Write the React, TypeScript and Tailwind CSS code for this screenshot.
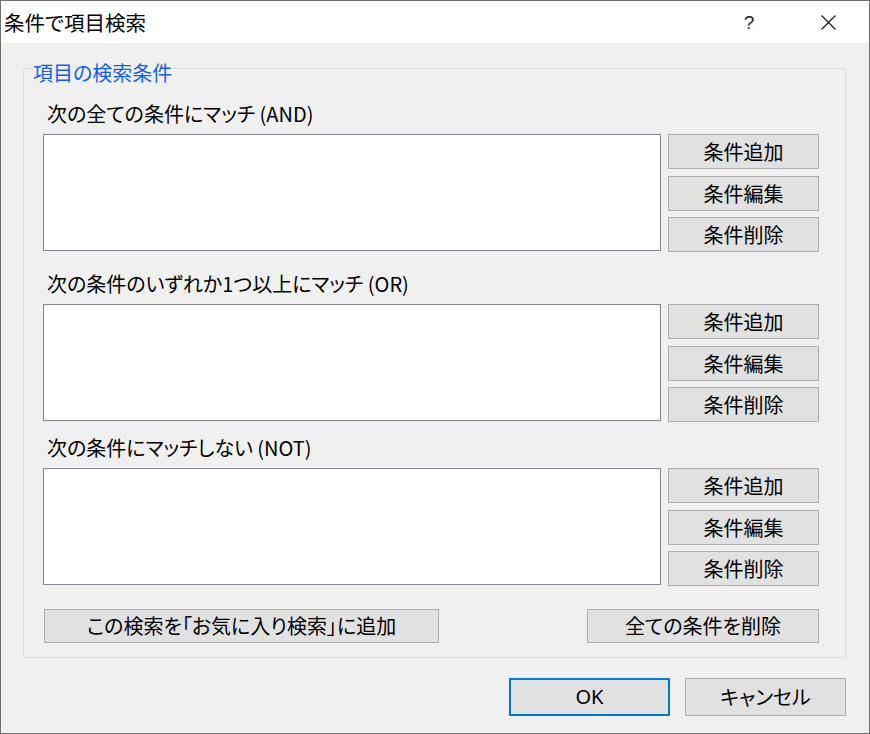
import React from "react";

const FONT =
  "font-['Noto_Sans_CJK_JP','Noto_Sans',sans-serif] [font-feature-settings:'palt']";

function Btn({
  children,
  className = "",
}: {
  children: React.ReactNode;
  className?: string;
}) {
  return (
    <button
      type="button"
      className={`flex items-center justify-center bg-[#e1e1e1] border border-[#adadad] text-[20px] leading-none text-black ${className}`}
    >
      {children}
    </button>
  );
}

function Section({
  label,
  className = "",
}: {
  label: string;
  className?: string;
}) {
  return (
    <div className={`flex flex-col ${className}`}>
      <div className="h-[28px] leading-[28px] text-[20px] text-black ml-[4px] whitespace-nowrap">
        {label}
      </div>
      <div className="mt-[6px] flex gap-[7px]">
        <div className="w-[618px] h-[117px] bg-white border border-[#828790]" />
        <div className="flex flex-col">
          <Btn className="w-[151px] h-[35px]">条件追加</Btn>
          <Btn className="w-[151px] h-[35px] mt-[7px]">条件編集</Btn>
          <Btn className="w-[151px] h-[35px] mt-[6px]">条件削除</Btn>
        </div>
      </div>
    </div>
  );
}

export default function App() {
  return (
    <div
      className={`w-[870px] h-[734px] border border-[#6f6f6f] bg-[#f0f0f0] flex flex-col ${FONT}`}
    >
      {/* Title bar */}
      <div className="h-[42px] bg-white flex items-center shrink-0">
        <div className="flex-1 pl-[3px] text-[20.5px] leading-none text-black whitespace-nowrap">
          条件で項目検索
        </div>
        <span className="w-[20px] text-center text-[19px] leading-none text-[#222] font-['Liberation_Sans',sans-serif] font-light">
          ?
        </span>
        <svg
          className="ml-[62px] mr-[33px]"
          width="15"
          height="15"
          viewBox="0 0 15 15"
          fill="none"
          stroke="#111"
          strokeWidth="1.1"
        >
          <path d="M0.5 0.5 L14.5 14.5 M14.5 0.5 L0.5 14.5" />
        </svg>
      </div>

      {/* Body */}
      <div className="flex-1 flex flex-col">
        <fieldset className="ml-[22px] mt-[10px] w-[823px] border border-[#dcdcdc] rounded-[3px]">
          <legend className="ml-[8px] px-[1px] pt-[10px] text-[20px] leading-[20px] text-[#155ee8]">
            項目の検索条件
          </legend>
          <div className="pl-[19px] pr-[26px] pb-[14px] flex flex-col">
            <Section label="次の全ての条件にマッチ (AND)" className="mt-[17px]" />
            <Section
              label="次の条件のいずれか1つ以上にマッチ (OR)"
              className="mt-[18px]"
            />
            <Section
              label="次の条件にマッチしない (NOT)"
              className="mt-[12px]"
            />
            <div className="mt-[23px] flex justify-between">
              <Btn className="ml-[1px] w-[395px] h-[34px]">
                この検索を「お気に入り検索」に追加
              </Btn>
              <Btn className="w-[232px] h-[34px]">全ての条件を削除</Btn>
            </div>
          </div>
        </fieldset>

        <div className="mt-[20px] flex justify-end gap-[15px] pr-[23px]">
          <button
            type="button"
            className="w-[161px] h-[38px] bg-[#e1e1e1] border-2 border-[#0078d7] text-[20px] leading-none text-black font-['Noto_Sans',sans-serif]"
          >
            OK
          </button>
          <Btn className="w-[161px] h-[38px]">キャンセル</Btn>
        </div>
      </div>
    </div>
  );
}
